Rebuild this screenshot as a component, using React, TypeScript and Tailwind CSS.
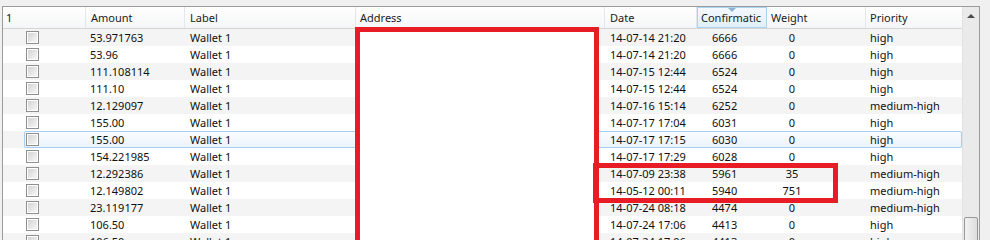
type Tx = {
  amount: string;
  date: string;
  conf: string;
  weight: string;
  priority: string;
};

const rows: Tx[] = [
  { amount: "53.971763", date: "14-07-14 21:20", conf: "6666", weight: "0", priority: "high" },
  { amount: "53.96", date: "14-07-14 21:20", conf: "6666", weight: "0", priority: "high" },
  { amount: "111.108114", date: "14-07-15 12:44", conf: "6524", weight: "0", priority: "high" },
  { amount: "111.10", date: "14-07-15 12:44", conf: "6524", weight: "0", priority: "high" },
  { amount: "12.129097", date: "14-07-16 15:14", conf: "6252", weight: "0", priority: "medium-high" },
  { amount: "155.00", date: "14-07-17 17:04", conf: "6031", weight: "0", priority: "high" },
  { amount: "155.00", date: "14-07-17 17:15", conf: "6030", weight: "0", priority: "high" },
  { amount: "154.221985", date: "14-07-17 17:29", conf: "6028", weight: "0", priority: "high" },
  { amount: "12.292386", date: "14-07-09 23:38", conf: "5961", weight: "35", priority: "medium-high" },
  { amount: "12.149802", date: "14-05-12 00:11", conf: "5940", weight: "751", priority: "medium-high" },
  { amount: "23.119177", date: "14-07-24 08:18", conf: "4474", weight: "0", priority: "medium-high" },
  { amount: "106.50", date: "14-07-24 17:06", conf: "4413", weight: "0", priority: "high" },
  { amount: "106.50", date: "14-07-24 17:06", conf: "4413", weight: "0", priority: "high" },
];

const Checkbox = () => (
  <div className="w-[13px] h-[13px] border border-[#8e8f8f] bg-white p-[1px]">
    <div className="w-full h-full bg-gradient-to-br from-[#d4d4d4] to-[#f7f7f7]" />
  </div>
);

const HeaderCell = (props: { label: string; w: string; pad: string }) => (
  <div
    className={`${props.w} ${props.pad} h-full flex items-center border-r border-[#e3e6ea] overflow-hidden whitespace-nowrap`}
  >
    {props.label}
  </div>
);

const Row = (props: { tx: Tx; index: number }) => {
  const selected = props.index === 6;
  const stripe = props.index % 2 === 0 ? "bg-[#f4f4f4]" : "bg-white";
  return (
    <div className={`flex h-[17px] ${stripe}`}>
      <div className="w-[21px] shrink-0" />
      <div
        className={`flex flex-1 items-center rounded-[2px] border ${
          selected
            ? "border-[#a7cdf0] bg-gradient-to-b from-[#fafcff] to-[#ebf3fc]"
            : "border-transparent"
        }`}
      >
        <div className="w-[61px] pl-[1px] flex items-center">
          <Checkbox />
        </div>
        <div className="w-[99px] pl-[4px]">{props.tx.amount}</div>
        <div className="w-[171px] pl-[5px]">Wallet 1</div>
        <div className="w-[249px]" />
        <div className="w-[92px] pl-[5px] whitespace-nowrap">{props.tx.date}</div>
        <div className="w-[70px] pl-[15px]">{props.tx.conf}</div>
        <div className="w-[99px]">
          <div className="w-[50px] text-center">{props.tx.weight}</div>
        </div>
        <div className="w-[95px] pl-[4px]">{props.tx.priority}</div>
      </div>
    </div>
  );
};

export default function App() {
  return (
    <div
      className="relative w-[990px] h-[240px] overflow-hidden bg-[#f0f0f0] pt-[6px] pl-[2px] text-[11px] leading-[15px] text-[#101010]"
      style={{ fontFamily: '"Noto Sans", "Open Sans", sans-serif' }}
    >
      <div className="flex w-[978px] h-[300px] border border-[#9c9c9c] bg-white">
        <div className="w-[959px] flex flex-col">
          <div className="flex h-[22px] border-b border-[#d5d5d5] bg-gradient-to-b from-white to-[#f5f6f7] text-[#1b1b1b]">
            <HeaderCell label="1" w="w-[83px]" pad="pl-[3px]" />
            <HeaderCell label="Amount" w="w-[99px]" pad="pl-[5px]" />
            <HeaderCell label="Label" w="w-[171px]" pad="pl-[5px]" />
            <HeaderCell label="Address" w="w-[249px]" pad="pl-[4px]" />
            <HeaderCell label="Date" w="w-[92px]" pad="pl-[5px]" />
            <div className="relative w-[70px] h-full flex items-center pl-[3px] border border-[#a9d4ef] bg-gradient-to-b from-[#f3f9fd] to-[#e1effa] overflow-hidden whitespace-nowrap">
              <span className="absolute top-0 left-[30px] w-0 h-0 border-l-[4px] border-r-[4px] border-t-[4px] border-l-transparent border-r-transparent border-t-[#8fb3d3]" />
              Confirmatic
            </div>
            <HeaderCell label="Weight" w="w-[99px]" pad="pl-[4px]" />
            <div className="w-[96px] h-full flex items-center pl-[4px]">Priority</div>
          </div>
          {rows.map((tx, i) => (
            <Row key={i} tx={tx} index={i} />
          ))}
        </div>
        <div className="w-[17px] flex flex-col bg-[#eaeaea] border-l border-[#e2e2e2]">
          <div className="h-[17px] flex items-center justify-center">
            <div className="w-0 h-0 border-l-[4px] border-r-[4px] border-b-[4px] border-l-transparent border-r-transparent border-b-[#4a4a4a]" />
          </div>
          <div className="h-[193px]" />
          <div className="mx-[1px] h-[40px] rounded-[2px] border border-[#979797] bg-gradient-to-r from-[#f2f2f2] to-[#dcdcdc]" />
        </div>
      </div>

      <div className="absolute left-[355px] top-[27px] w-[244px] h-[260px] border-[5px] border-[#e81c24] bg-white" />
      <div className="absolute left-[593px] top-[163px] w-[245px] h-[40px] border-[5px] border-[#e81c24]" />
    </div>
  );
}
